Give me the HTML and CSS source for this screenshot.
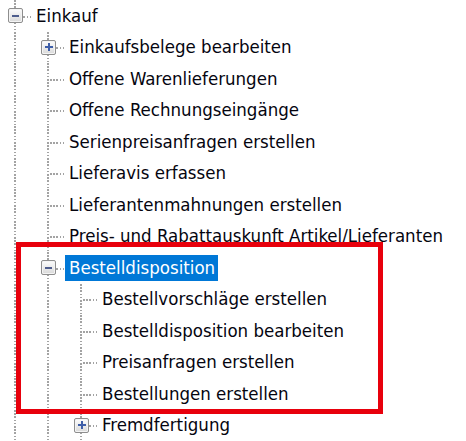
FILE: index.html
```html
<!DOCTYPE html>
<html lang="de">
<head>
<meta charset="utf-8">
<title>Einkauf</title>
<link rel="stylesheet" href="styles.css">
</head>
<body>
<div class="tree">
  <div class="row"><span class="g tee"><span class="box minus"></span></span><span class="label">Einkauf</span></div>
  <div class="row"><span class="g v"></span><span class="g tee"><span class="box plus"></span></span><span class="label">Einkaufsbelege bearbeiten</span></div>
  <div class="row"><span class="g v"></span><span class="g tee"></span><span class="label">Offene Warenlieferungen</span></div>
  <div class="row"><span class="g v"></span><span class="g tee"></span><span class="label">Offene Rechnungseingänge</span></div>
  <div class="row"><span class="g v"></span><span class="g tee"></span><span class="label">Serienpreisanfragen erstellen</span></div>
  <div class="row"><span class="g v"></span><span class="g tee"></span><span class="label">Lieferavis erfassen</span></div>
  <div class="row"><span class="g v"></span><span class="g tee"></span><span class="label">Lieferantenmahnungen erstellen</span></div>
  <div class="row"><span class="g v"></span><span class="g tee"></span><span class="label">Preis- und Rabattauskunft Artikel/Lieferanten</span></div>
  <div class="row"><span class="g v"></span><span class="g tee"><span class="box minus"></span></span><span class="label selected">Bestelldisposition</span></div>
  <div class="row"><span class="g v"></span><span class="g v"></span><span class="g tee"></span><span class="label">Bestellvorschläge erstellen</span></div>
  <div class="row"><span class="g v"></span><span class="g v"></span><span class="g tee"></span><span class="label">Bestelldisposition bearbeiten</span></div>
  <div class="row"><span class="g v"></span><span class="g v"></span><span class="g tee"></span><span class="label">Preisanfragen erstellen</span></div>
  <div class="row"><span class="g v"></span><span class="g v"></span><span class="g tee"></span><span class="label">Bestellungen erstellen</span></div>
  <div class="row"><span class="g v"></span><span class="g v"></span><span class="g tee"><span class="box plus"></span></span><span class="label">Fremdfertigung</span></div>
</div>
<div class="annot"></div>
</body>
</html>
```
FILE: styles.css
```css
html, body {
  margin: 0;
  padding: 0;
  background: #ffffff;
  overflow: hidden;
  width: 466px;
  height: 441px;
}
body {
  position: relative;
  font-family: "DejaVu Sans Condensed", "DejaVu Sans", sans-serif;
  font-stretch: condensed;
  color: #05050f;
}
.tree {
  display: flex;
  flex-direction: column;
  padding-top: 0;
}
.row {
  display: flex;
  align-items: center;
  height: 31.5px;
  white-space: nowrap;
}
.g {
  flex: 0 0 33px;
  width: 33px;
  height: 100%;
  display: flex;
  align-items: center;
  background-repeat: no-repeat;
}
.v {
  background-image: repeating-linear-gradient(to bottom, #a3a3a3 0 1.6px, transparent 1.6px 3.2px);
  background-position: 14px 0;
  background-size: 2px 100%;
}
.tee {
  background-image:
    repeating-linear-gradient(to bottom, #a3a3a3 0 1.6px, transparent 1.6px 3.2px),
    repeating-linear-gradient(to right, #a3a3a3 0 1.6px, transparent 1.6px 3.2px);
  background-position: 14px 0, 17px 15.5px;
  background-size: 2px 100%, 16px 2px;
}
.box {
  box-sizing: border-box;
  width: 15px;
  height: 15px;
  margin-left: 8px;
  border: 1px solid #8e8e8e;
  border-radius: 2px;
  box-shadow: inset 0 0 0 1px #f4f4f4;
  background-repeat: no-repeat;
}
.minus {
  background-image:
    linear-gradient(#4e5d8c, #4e5d8c),
    linear-gradient(#fdfdfd, #d9d9d9);
  background-position: center, 0 0;
  background-size: 7px 2px, 100% 100%;
}
.plus {
  background-image:
    linear-gradient(#3e5ea8, #3e5ea8),
    linear-gradient(#3e5ea8, #3e5ea8),
    linear-gradient(#fdfdfd, #d9d9d9);
  background-position: center, center, 0 0;
  background-size: 8px 2px, 2px 8px, 100% 100%;
}
.label {
  font-size: 18.5px;
  line-height: 26px;
  height: 26px;
  padding: 0 3px;
}
.selected {
  margin-left: -1px;
  padding: 0 3px 0 4px;
  background: #0078d7;
  color: #ffffff;
}
.annot {
  position: absolute;
  left: 16px;
  top: 242px;
  width: 367px;
  height: 172px;
  box-sizing: border-box;
  border: 5px solid #e8000c;
}
```
